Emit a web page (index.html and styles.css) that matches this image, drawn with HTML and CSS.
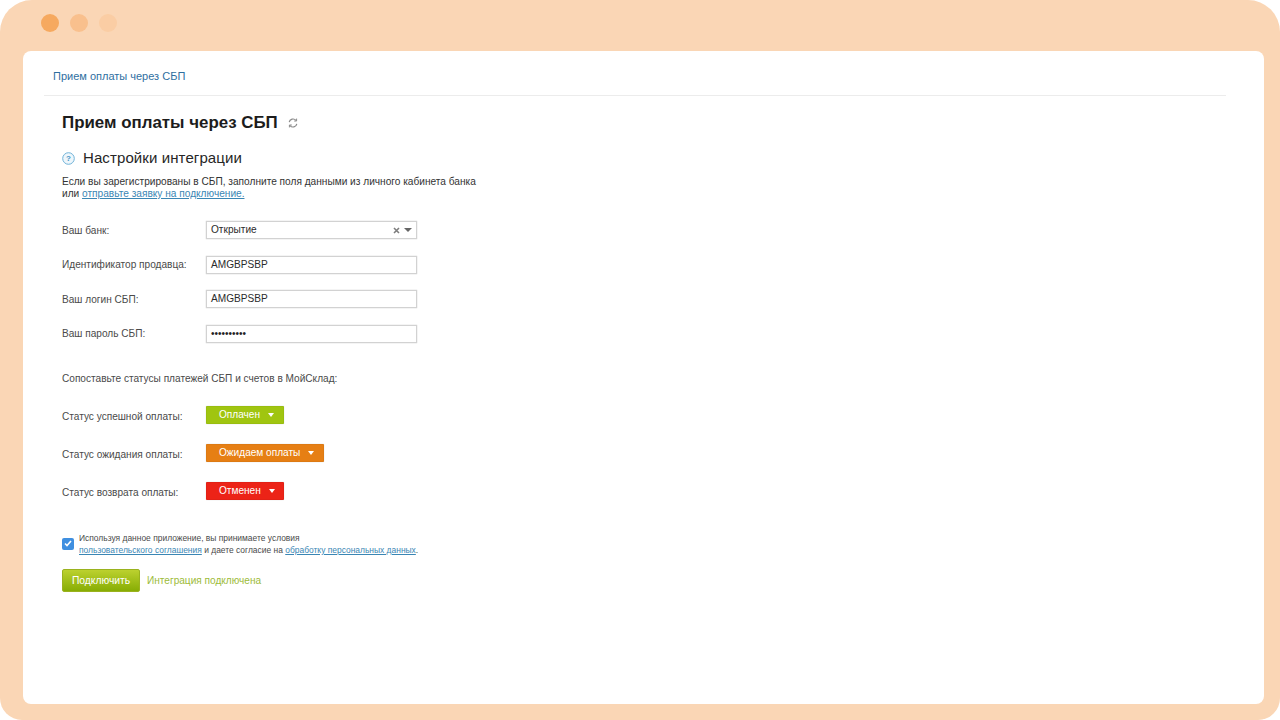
FILE: index.html
```html
<!DOCTYPE html>
<html lang="ru">
<head>
<meta charset="utf-8">
<title>Прием оплаты через СБП</title>
<link rel="stylesheet" href="styles.css">
</head>
<body>
<div class="frame">
  <div class="dots"><span class="dot d1"></span><span class="dot d2"></span><span class="dot d3"></span></div>
  <main class="card">
    <nav class="crumb"><a href="#">Прием оплаты через СБП</a></nav>
    <div class="content">
      <div class="title-row">
        <h1>Прием оплаты через СБП</h1>
        <svg class="refresh" width="10" height="10" viewBox="0 0 10 10" fill="none" stroke="#8a8a8a" stroke-width="1.2"><path d="M1.2 4.2A3.9 3.9 0 0 1 8 2.4"/><path d="M8.8 5.8A3.9 3.9 0 0 1 2 7.6"/><path d="M8.6 .6v2.4H6.2" stroke-width="1"/><path d="M1.4 9.4V7h2.4" stroke-width="1"/></svg>
      </div>
      <div class="section-row">
        <svg class="help" width="13" height="13" viewBox="0 0 13 13"><circle cx="6.5" cy="6.5" r="5.8" fill="#eef6fb" stroke="#6fb2d8" stroke-width="1"/><text x="6.5" y="9.3" text-anchor="middle" class="help-q">?</text></svg>
        <h2>Настройки интеграции</h2>
      </div>
      <p class="intro">Если вы зарегистрированы в СБП, заполните поля данными из личного кабинета банка<br>или <a href="#">отправьте заявку на подключение.</a></p>
      <div class="fields">
        <div class="field"><label>Ваш банк:</label>
          <div class="input select"><span>Открытие</span><span class="sel-icons"><svg width="7" height="7" viewBox="0 0 7 7" stroke="#7d7d7d" stroke-width="1.6"><path d="M1 1l5 5M6 1L1 6"/></svg><i class="caret grey"></i></span></div></div>
        <div class="field"><label>Идентификатор продавца:</label><div class="input">AMGBPSBP</div></div>
        <div class="field"><label>Ваш логин СБП:</label><div class="input">AMGBPSBP</div></div>
        <div class="field"><label>Ваш пароль СБП:</label><div class="input pass">••••••••••</div></div>
      </div>
      <p class="match">Сопоставьте статусы платежей СБП и счетов в МойСклад:</p>
      <div class="statuses">
        <div class="status"><label>Статус успешной оплаты:</label><div class="badge green">Оплачен<i class="caret"></i></div></div>
        <div class="status"><label>Статус ожидания оплаты:</label><div class="badge orange">Ожидаем оплаты<i class="caret"></i></div></div>
        <div class="status"><label>Статус возврата оплаты:</label><div class="badge red">Отменен<i class="caret"></i></div></div>
      </div>
      <div class="agree">
        <span class="check"><svg width="8" height="7" viewBox="0 0 8 7" fill="none" stroke="#fff" stroke-width="1.6"><path d="M1 3.5l2 2 4-4.5"/></svg></span>
        <p>Используя данное приложение, вы принимаете условия<br><a href="#">пользовательского соглашения</a> и даете согласие на <a href="#">обработку персональных данных</a>.</p>
      </div>
      <div class="actions">
        <button class="connect" type="button">Подключить</button>
        <span class="ok">Интеграция подключена</span>
      </div>
    </div>
  </main>
</div>
</body>
</html>
```

FILE: styles.css
```css
* { box-sizing: border-box; }
html, body { margin: 0; padding: 0; background: #fff; }
body { width: 1280px; height: 720px; overflow: hidden; font-family: "Liberation Sans", Arial, sans-serif; color: #333; }
a { color: #2f7cab; }
p, h1, h2 { margin: 0; }
.frame { width: 1280px; height: 720px; background: #fad6b5; border-radius: 32px 32px 22px 22px; padding: 14px 16px 16px 23px; display: flex; flex-direction: column; }
.dots { display: flex; gap: 11px; height: 37px; padding-left: 18px; }
.dot { width: 18px; height: 18px; border-radius: 50%; }
.d1 { background: #f6a95f; }
.d2 { background: #f9c08d; }
.d3 { background: #facda4; }
.card { flex: 1; background: #fff; border-radius: 8px; padding: 0 38px 0 21px; }
.crumb { height: 45px; border-bottom: 1px solid #ececec; padding: 19px 0 0 9px; font-size: 11px; line-height: 13px; }
.crumb a { color: #2f6f9f; text-decoration: none; }
.content { padding: 16px 0 0 18px; }
.title-row { display: flex; align-items: center; gap: 10px; height: 22px; }
h1 { font-size: 16.9px; line-height: 22px; font-weight: bold; color: #1c1c1c; }
.refresh { margin-top: -1px; }
.section-row { display: flex; align-items: center; gap: 8px; margin-top: 14px; height: 20px; }
h2 { font-size: 15px; line-height: 20px; font-weight: normal; color: #262626; letter-spacing: .1px; }
.help-q { font: bold 8px "Liberation Sans", sans-serif; fill: #3f94c6; }
.intro { margin-top: 8px; font-size: 10.15px; line-height: 12px; color: #333; }
.intro a { color: #3a86b4; }
.fields { margin-top: 21px; display: flex; flex-direction: column; gap: 16.6px; }
.field, .status { display: flex; align-items: center; font-size: 10.1px; }
label { width: 144px; color: #4a4a4a; }
.status label { padding-top: 4px; }
.input { width: 211px; height: 18px; border: 1px solid #d2d2d2; box-shadow: 0 0 1px #bbb; background: #fff; padding: 0 4px; line-height: 16px; font-size: 10.1px; color: #2b2b2b; display: flex; align-items: center; }
.select { justify-content: space-between; }
.sel-icons { display: flex; align-items: center; gap: 4px; padding-right: 0; }
.caret { display: inline-block; width: 0; height: 0; border-left: 3.5px solid transparent; border-right: 3.5px solid transparent; border-top: 4px solid #fff; margin-left: 8px; }
.caret.grey { border-top-color: #666; margin-left: 0; border-left-width: 4px; border-right-width: 4px; }
.pass { font-size: 10px; color: #222; }
.match { margin-top: 29px; font-size: 10.1px; line-height: 13px; color: #4a4a4a; }
.statuses { margin-top: 21px; display: flex; flex-direction: column; gap: 20px; }
.badge { height: 18px; line-height: 17px; padding: 0 8.5px 0 12px; border-radius: 1px; color: #fff; font-size: 10.1px; border: 1px solid rgba(0,0,0,.04); box-shadow: 0 0 1px #bbb; display: flex; align-items: center; }
.green { background: #a0c510; }
.orange { background: #e67f14; }
.red { background: #ec2317; }
.agree { margin-top: 32px; display: flex; align-items: center; gap: 5px; }
.agree p { font-size: 8.45px; line-height: 12px; color: #4a4a4a; }
.agree a { color: #3a86b4; }
.check { width: 12px; height: 12px; border-radius: 2px; background: #3f8fe0; display: flex; align-items: center; justify-content: center; }
.actions { margin-top: 13px; display: flex; align-items: center; gap: 7px; }
.connect { width: 78px; height: 23px; padding: 0; border: 1px solid #9ab21e; border-radius: 2px; background: linear-gradient(#bcd12f, #87ad04); color: #fff; font: 10.3px "Liberation Sans", Arial, sans-serif; }
.ok { font-size: 10.1px; color: #9dbb3a; }
```
